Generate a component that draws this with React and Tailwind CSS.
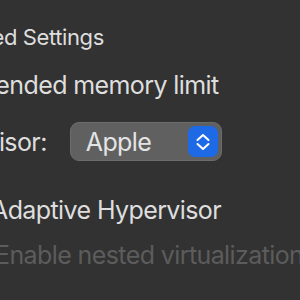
import React from 'react';

const Chevrons = () => (
    <svg width="16" height="22" viewBox="0 0 16 22" fill="none" stroke="white" strokeWidth="2" strokeLinecap="round" strokeLinejoin="round">
        <path d="M2.5 9 L8 4 L13.5 9" />
        <path d="M2.5 13 L8 18 L13.5 13" />
    </svg>
);

const App = () => {
    return (
        <div
            className="w-[300px] h-[300px] overflow-hidden bg-[#323232] text-[#dedede] text-[25px] leading-[26px] tracking-[-0.6px]"
            style={{ fontFamily: 'Inter, "Noto Sans", sans-serif' }}
        >
            <div className="pt-[24px] ml-[-85px] whitespace-nowrap text-[22px] tracking-[-0.4px]">Advanced Settings</div>

            <div className="mt-[22px] ml-[-40px] whitespace-nowrap">Extended memory limit</div>

            <div className="mt-[24px] flex items-center ml-[-84px] whitespace-nowrap">
                <span>Hypervisor:</span>
                <div className="ml-[23px] w-[152px] h-[39px] rounded-[9px] bg-[#606060] border border-[#6c6c6c] flex items-center justify-between pl-[15px] pr-[3px]">
                    <span className="text-[#e4e4e4]">Apple</span>
                    <div className="w-[30px] h-[31px] rounded-[7px] bg-[#1e69e6] flex items-center justify-center">
                        <Chevrons />
                    </div>
                </div>
            </div>

            <div className="mt-[36px] ml-[-9px] whitespace-nowrap">Adaptive Hypervisor</div>

            <div className="mt-[19px] ml-[-5px] whitespace-nowrap text-[#5c5c5c]">Enable nested virtualization</div>
        </div>
    );
};

export default App;
